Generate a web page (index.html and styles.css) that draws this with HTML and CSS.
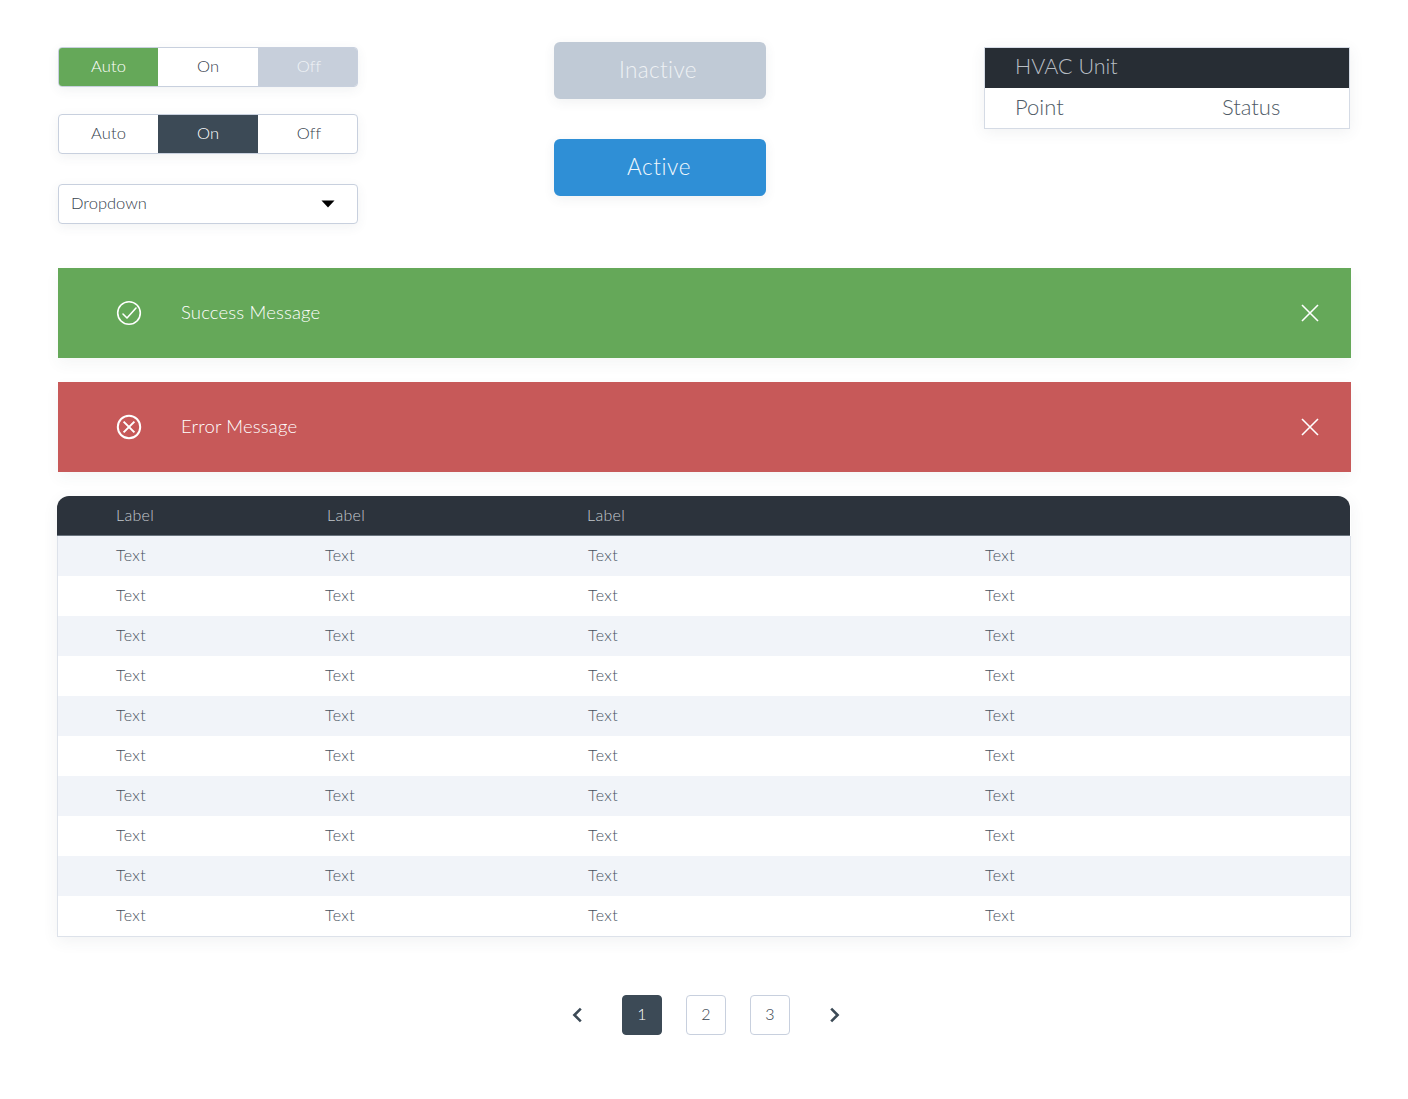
FILE: index.html
```html
<!DOCTYPE html>
<html lang="en">
<head>
<meta charset="utf-8">
<title>UI Kit</title>
<link rel="stylesheet" href="styles.css">
</head>
<body>
<main class="page">
  <section class="top">
    <div class="controls">
      <div class="seg">
        <div class="seg-item seg-green">Auto</div>
        <div class="seg-item">On</div>
        <div class="seg-item seg-off">Off</div>
      </div>
      <div class="seg seg-second">
        <div class="seg-item">Auto</div>
        <div class="seg-item seg-dark">On</div>
        <div class="seg-item">Off</div>
      </div>
      <div class="dropdown">
        <span class="dropdown-label">Dropdown</span>
        <svg class="caret" width="14" height="8" viewBox="0 0 14 8"><path d="M0.5 0.5H13.5L7 7.5Z" fill="#000"/></svg>
      </div>
    </div>
    <div class="buttons">
      <div class="btn btn-inactive">Inactive</div>
      <div class="btn btn-active">Active</div>
    </div>
    <div class="card">
      <div class="card-head">HVAC Unit</div>
      <div class="card-row"><span class="card-point">Point</span><span>Status</span></div>
    </div>
  </section>

  <section class="banner banner-success">
    <svg class="banner-icon" width="26" height="26" viewBox="0 0 26 26" fill="none" stroke="#fff" stroke-width="1.6"><circle cx="13" cy="13" r="11.3"/><path d="M7 14L11 18L20 8" stroke-linecap="round" stroke-linejoin="round"/></svg>
    <span class="banner-text">Success Message</span>
    <svg class="banner-close" width="18" height="18" viewBox="0 0 18 18" fill="none" stroke="#fff" stroke-width="1.6"><path d="M1 1L17 17M17 1L1 17"/></svg>
  </section>
  <section class="banner banner-error">
    <svg class="banner-icon" width="26" height="26" viewBox="0 0 26 26" fill="none" stroke="#fff" stroke-width="2"><circle cx="13" cy="13" r="11.2"/><path d="M7.6 7.6L18.4 18.4M18.4 7.6L7.6 18.4"/></svg>
    <span class="banner-text">Error Message</span>
    <svg class="banner-close" width="18" height="18" viewBox="0 0 18 18" fill="none" stroke="#fff" stroke-width="1.6"><path d="M1 1L17 17M17 1L1 17"/></svg>
  </section>

  <section class="table">
    <div class="thead"><span>Label</span><span>Label</span><span>Label</span></div>
    <div class="tbody">
      <div class="tr"><span>Text</span><span>Text</span><span>Text</span><span>Text</span></div>
      <div class="tr"><span>Text</span><span>Text</span><span>Text</span><span>Text</span></div>
      <div class="tr"><span>Text</span><span>Text</span><span>Text</span><span>Text</span></div>
      <div class="tr"><span>Text</span><span>Text</span><span>Text</span><span>Text</span></div>
      <div class="tr"><span>Text</span><span>Text</span><span>Text</span><span>Text</span></div>
      <div class="tr"><span>Text</span><span>Text</span><span>Text</span><span>Text</span></div>
      <div class="tr"><span>Text</span><span>Text</span><span>Text</span><span>Text</span></div>
      <div class="tr"><span>Text</span><span>Text</span><span>Text</span><span>Text</span></div>
      <div class="tr"><span>Text</span><span>Text</span><span>Text</span><span>Text</span></div>
      <div class="tr"><span>Text</span><span>Text</span><span>Text</span><span>Text</span></div>
    </div>
  </section>

  <nav class="pager">
    <svg class="chev" width="12" height="16" viewBox="0 0 12 16" fill="none" stroke="#3c4a56" stroke-width="2.6"><path d="M9.8 1.6L3.4 8L9.8 14.4"/></svg>
    <div class="page-num page-current">1</div>
    <div class="page-num">2</div>
    <div class="page-num">3</div>
    <svg class="chev" width="12" height="16" viewBox="0 0 12 16" fill="none" stroke="#3c4a56" stroke-width="2.6"><path d="M2.2 1.6L8.6 8L2.2 14.4"/></svg>
  </nav>
</main>
</body>
</html>
```
FILE: styles.css
```css
* { box-sizing: border-box; }
html, body { margin: 0; padding: 0; background: #fff; }
body {
  font-family: Lato, "Open Sans", "Liberation Sans", sans-serif;
  font-weight: 300;
  color: #36424d;
  height: 1099px;
  overflow: hidden;
}
.page { padding: 42px 57px 0 57px; }

.top { display: flex; align-items: flex-start; padding-left: 1px; height: 226px; }
.controls { width: 300px; margin-top: 5px; margin-right: 196px; }
.seg {
  display: flex; height: 40px; border: 1px solid #c8d0de; border-radius: 4px;
  background: #fff; overflow: hidden;
  box-shadow: 0 3px 12px rgba(60, 74, 86, 0.07);
}
.seg-second { margin-top: 27px; }
.seg-item {
  flex: 0 0 99px; display: flex; align-items: center; justify-content: center;
  padding-bottom: 2px; font-size: 16.5px; letter-spacing: 0.1px;
}
.seg-item:nth-child(2) { flex-basis: 100px; }
.seg-item:nth-child(3) { padding-left: 3px; }
.seg-green { background: #65a859; color: #fff; }
.seg-off { background: #c7cfdb; color: #f0f3f6; }
.seg .seg-dark { background: #3c4a56; color: #fff; }
.dropdown {
  display: flex; align-items: center; justify-content: space-between;
  height: 40px; margin-top: 30px; padding: 0 22px 0 12px;
  border: 1px solid #c8d0de; border-radius: 4px; background: #fff;
  font-size: 16.5px;
  box-shadow: 0 3px 12px rgba(60, 74, 86, 0.07);
}
.dropdown-label { margin-bottom: 2px; }
.caret { display: block; }

.buttons { width: 212px; margin-right: 218px; display: flex; flex-direction: column; gap: 40px; }
.btn {
  height: 57px; border-radius: 6px; display: flex; align-items: center; justify-content: center;
  padding-bottom: 2px; font-size: 22.5px; letter-spacing: 0.35px;
  box-shadow: 0 3px 12px rgba(60, 74, 86, 0.08);
}
.btn-inactive { background: #c0cad6; color: #eef1f4; padding-right: 4px; }
.btn-active { background: #2f8fd6; color: #f0f8fd; letter-spacing: 0.6px; padding-right: 2px; }

.card {
  width: 366px; margin-top: 5px; border: 1px solid #d5dbe5; background: #fff;
  box-shadow: 0 3px 14px rgba(60, 74, 86, 0.08);
}
.card-head {
  height: 40px; background: #272d34; color: #b8bec4; padding: 0 0 4px 30px;
  display: flex; align-items: center; font-size: 21.5px;
}
.card-row {
  height: 40px; display: flex; align-items: center; padding: 0 0 4px 30px;
  font-size: 22px; color: #4f5b66;
}
.card-point { width: 207px; }

.banner {
  display: flex; align-items: center; height: 90px; margin-left: 1px; color: #fff;
  box-shadow: 0 6px 14px rgba(60, 74, 86, 0.05);
}
.banner-error { margin-top: 24px; background: #c75959; }
.banner-success { background: #65a859; }
.banner-icon { margin-left: 58px; flex: none; }
.banner-text { margin: 0 0 2px 39px; flex: 1; font-size: 18.5px; letter-spacing: 0.15px; }
.banner-close { margin-right: 32px; flex: none; }

.table {
  margin-top: 24px; background: #fff;
  box-shadow: 0 4px 16px rgba(60, 74, 86, 0.07);
  border-radius: 12px 12px 0 0;
}
.thead {
  height: 40px; background: #2c333c; color: #c4c9ce; border-radius: 12px 12px 0 0;
  border-bottom: 1px solid #6a747e; margin-right: 1px;
  display: grid; grid-template-columns: 211px 260px 1fr; align-items: center;
  padding: 0 0 3px 59px; font-size: 16px; letter-spacing: 0.3px;
}
.tbody { border: 1px solid #dde2ea; border-top: 0; }
.tr {
  height: 40px; display: grid; grid-template-columns: 209px 263px 397px 1fr; align-items: center;
  padding: 0 0 3px 58px; font-size: 16px; letter-spacing: 0.4px; color: #46525d;
}
.tr:nth-child(odd) { background: #f1f4f9; }

.pager { display: flex; align-items: center; justify-content: center; margin-top: 58px; padding-left: 4px; }
.chev { display: block; }
.chev:first-child { margin-right: 39px; }
.chev:last-child { margin-left: 39px; }
.page-num {
  width: 40px; height: 40px; border: 1px solid #c8d0de; border-radius: 4px;
  display: flex; align-items: center; justify-content: center;
  padding-bottom: 3px; font-size: 16px; margin-right: 24px;
}
.page-num:nth-child(4) { margin-right: 0; }
.page-current { background: #3c4a56; border-color: #3c4a56; color: #fff; }
```
